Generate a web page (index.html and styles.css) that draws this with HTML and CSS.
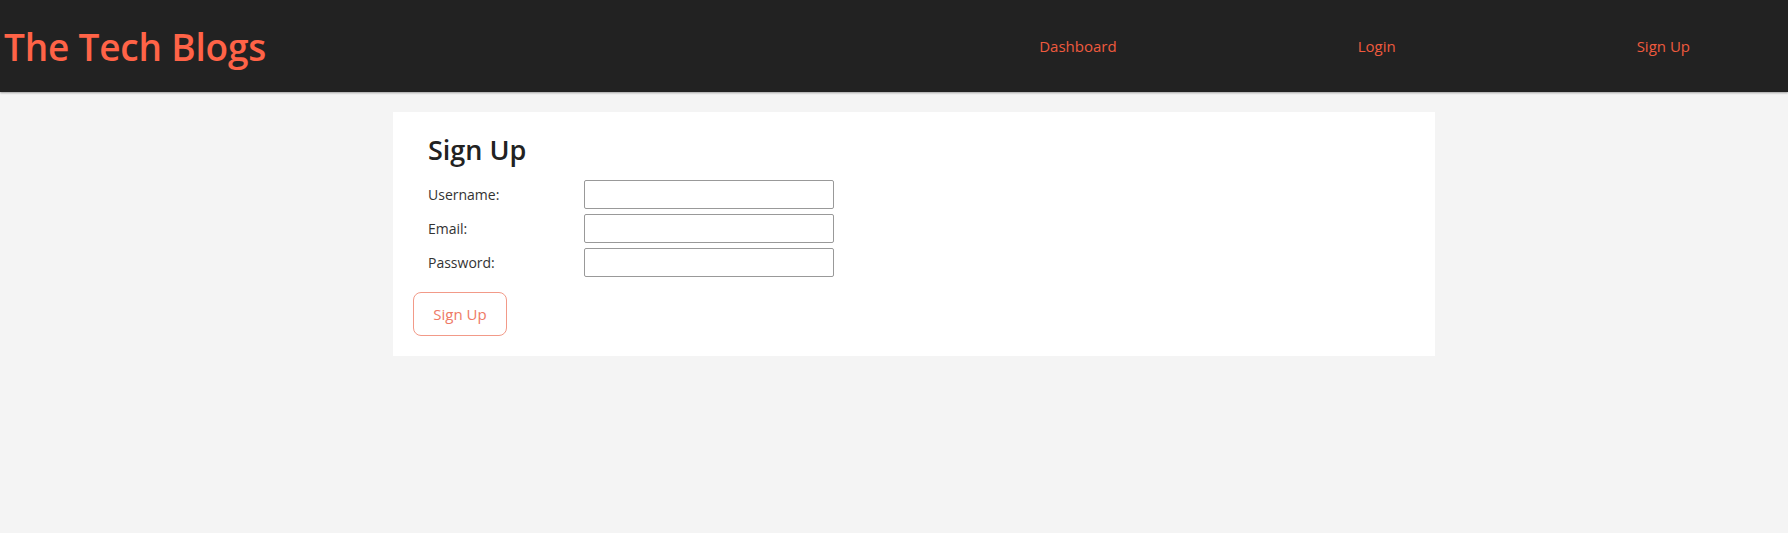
FILE: index.html
```html
<!DOCTYPE html>
<html lang="en">
<head>
<meta charset="utf-8">
<title>The Tech Blogs</title>
<link rel="stylesheet" href="styles.css">
</head>
<body>
<header class="site-header">
  <h1 class="brand">The Tech Blogs</h1>
  <nav class="nav">
    <a class="nav-link" href="#">Dashboard</a>
    <a class="nav-link" href="#">Login</a>
    <a class="nav-link" href="#">Sign Up</a>
  </nav>
</header>
<main class="main">
  <section class="card">
    <h2 class="card-title">Sign Up</h2>
    <form class="form">
      <div class="row">
        <label class="label" for="username">Username:</label>
        <input class="input" id="username" type="text">
      </div>
      <div class="row">
        <label class="label" for="email">Email:</label>
        <input class="input" id="email" type="email">
      </div>
      <div class="row">
        <label class="label" for="password">Password:</label>
        <input class="input" id="password" type="password">
      </div>
      <button class="btn" type="button">Sign Up</button>
    </form>
  </section>
</main>
</body>
</html>
```
FILE: styles.css
```css
* { box-sizing: border-box; }
body {
  margin: 0;
  background: #f4f4f4;
  font-family: "Open Sans", "Noto Sans", "Liberation Sans", sans-serif;
  color: #333;
}
.site-header {
  height: 92px;
  background: #222222;
  display: flex;
  align-items: center;
  box-shadow: 0 1px 2px rgba(0,0,0,0.35);
}
.brand {
  margin: 0;
  padding-left: 4px;
  font-size: 37px;
  font-weight: 600;
  color: #ff6347;
  letter-spacing: -0.2px;
}
.nav {
  margin-left: auto;
  margin-right: 98px;
  display: flex;
  gap: 241px;
}
.nav-link {
  color: #ef5a3e;
  text-decoration: none;
  font-size: 15px;
}
.main {
  padding-top: 20px;
}
.card {
  margin-left: 393px;
  width: 1042px;
  background: #ffffff;
  padding: 20px;
}
.card-title {
  margin: 0 0 13px 15px;
  font-size: 27px;
  font-weight: 600;
  line-height: 35px;
  color: #222;
}
.form {
  display: flex;
  flex-direction: column;
  gap: 5px;
  align-items: flex-start;
}
.row {
  display: flex;
  align-items: center;
  padding-left: 15px;
}
.label {
  width: 156px;
  font-size: 14px;
  color: #333;
}
.input {
  width: 250px;
  height: 29px;
  border: 1px solid #999;
  border-radius: 2px;
  background: #fff;
  margin: 0;
}
.btn {
  margin-top: 10px;
  width: 94px;
  height: 44px;
  background: #fff;
  border: 1px solid #f29a88;
  border-radius: 8px;
  color: #ee7a66;
  font-family: inherit;
  font-size: 15px;
  cursor: pointer;
}
```
